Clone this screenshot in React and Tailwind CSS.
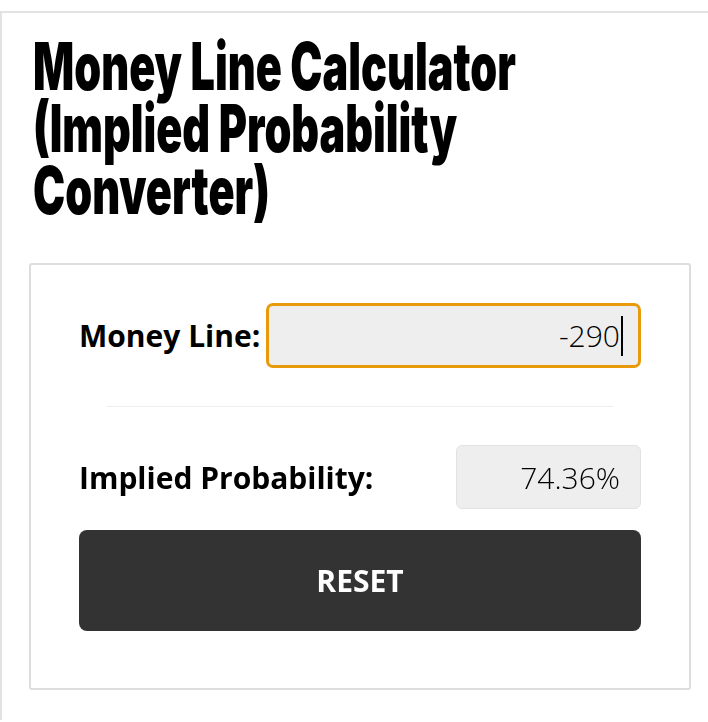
import React, { useState } from "react";

export default function App() {
  // Money line entered by the user
  const [moneyLine, setMoneyLine] = useState("-290");

  // Convert odds to implied probability
  const toProbability = (value) => {
    const n = parseFloat(value);
    if (isNaN(n) || n === 0) return "";
    const p = n < 0 ? -n / (-n + 100) : 100 / (n + 100);
    return (p * 100).toFixed(2) + "%";
  };

  return (
    <div className="min-h-screen bg-white pt-[11px] font-['Open_Sans',sans-serif] text-black">
      <div className="border-t-2 border-l-2 border-[#e2e2e2] pl-[27px] pr-[17px] pb-[30px]">
        {/* Title */}
        <h1 className="mt-[22px] ml-[4px] w-max origin-left scale-x-[0.653] whitespace-nowrap font-['Inter',sans-serif] text-[66px] font-black leading-[62px]">
          <span className="block">Money Line Calculator</span>
          <span className="block">(Implied Probability</span>
          <span className="block">Converter)</span>
        </h1>

        {/* Calculator card */}
        <div className="mt-[42px] border-2 border-[#dddddd] rounded-[3px] px-[48px] pt-[38px] pb-[57px]">
          <div className="flex items-center">
            <label className="text-[30px] font-bold whitespace-nowrap">
              Money Line:
            </label>
            <div className="ml-[6px] flex flex-1 min-w-0 h-[65px] items-center rounded-[7px] border-[3px] border-[#e99a0b] bg-[#eeeeee] pr-[15px]">
              <input
                type="text"
                autoFocus
                className="flex-1 min-w-0 bg-transparent text-right text-[30px] font-light text-black caret-black outline-none"
                value={moneyLine}
                onChange={(e) => setMoneyLine(e.target.value)}
              />
              {/* caret as seen in the focused field */}
              <span className="ml-px h-[40px] w-[2px] bg-black" />
            </div>
          </div>

          {/* Divider */}
          <div className="mx-[28px] mt-[38px] mb-[38px] h-px bg-[#eeeeee]" />

          <div className="flex items-center justify-between">
            <p className="text-[30px] font-bold whitespace-nowrap">
              Implied Probability:
            </p>
            <div className="flex h-[64px] w-[185px] items-center justify-end rounded-[6px] border border-[#e2e2e2] bg-[#eeeeee] pr-[20px] text-[30px] font-light">
              {toProbability(moneyLine)}
            </div>
          </div>

          {/* Reset */}
          <button
            className="mt-[21px] h-[101px] w-full rounded-[8px] bg-[#333333] text-[30px] font-bold text-white"
            onClick={() => setMoneyLine("")}
          >
            RESET
          </button>
        </div>
      </div>
    </div>
  );
}
